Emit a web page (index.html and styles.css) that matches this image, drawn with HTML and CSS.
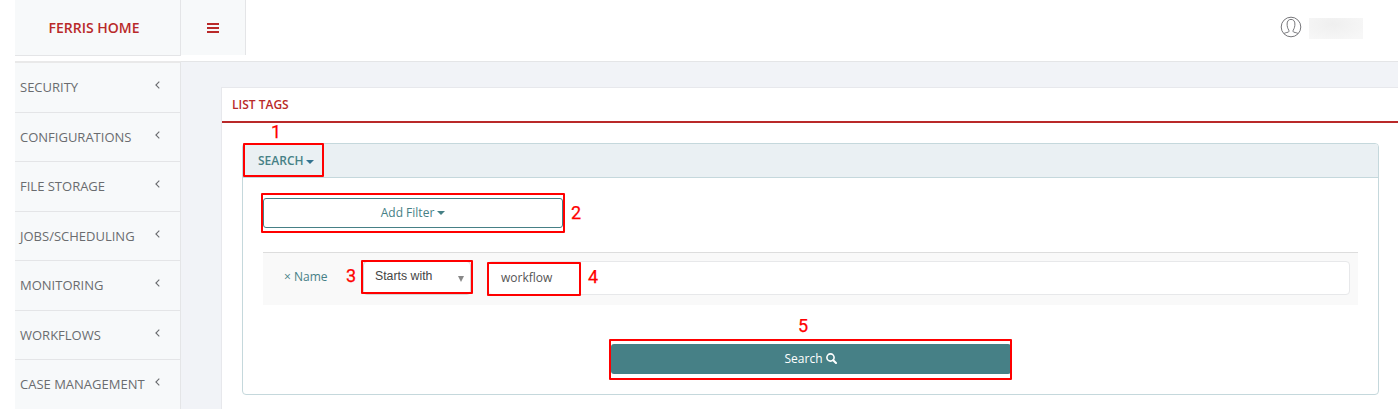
FILE: index.html
```
<!DOCTYPE html>
<html lang="en">
<head>
<meta charset="utf-8">
<title>List Tags</title>
<link rel="stylesheet" href="styles.css">
</head>
<body>
<div class="app">
  <header class="header">
    <a class="brand"><span>FERRIS HOME</span></a>
    <a class="toggle"><svg width="12" height="10" viewBox="0 0 12 10"><path d="M0 0h12v2H0zM0 4h12v2H0zM0 8h12v2H0z" fill="#b92929"/></svg></a>
    <div class="user">
      <svg width="22" height="22" viewBox="0 0 22 22" fill="none" stroke="#77777b" stroke-width="1"><circle cx="11" cy="11" r="9.800"/><path d="M4 17.600c.7-.7 2.500-1 4-1.400 1-.3 1.300-1 .7-2.200C7.600 12.300 7.100 10.300 7.100 8c0-2.800 1.300-4.600 3.900-4.600S14.900 5.200 14.900 8c0 2.300-.5 4.300-1.600 6-.6 1.200-.3 1.900.7 2.200 1.500.4 3.300.7 4 1.400"/></svg>
      <span class="user-name"></span>
    </div>
  </header>
  <div class="body">
    <nav class="sidebar">
      <a class="item"><span>SECURITY</span><svg class="chev" viewBox="0 0 5 8"><path d="M4.300.6.9 4l3.400 3.400"/></svg></a>
      <a class="item"><span>CONFIGURATIONS</span><svg class="chev" viewBox="0 0 5 8"><path d="M4.300.6.9 4l3.400 3.400"/></svg></a>
      <a class="item"><span>FILE STORAGE</span><svg class="chev" viewBox="0 0 5 8"><path d="M4.300.6.9 4l3.400 3.400"/></svg></a>
      <a class="item"><span>JOBS/SCHEDULING</span><svg class="chev" viewBox="0 0 5 8"><path d="M4.300.6.9 4l3.400 3.400"/></svg></a>
      <a class="item"><span>MONITORING</span><svg class="chev" viewBox="0 0 5 8"><path d="M4.300.6.9 4l3.400 3.400"/></svg></a>
      <a class="item"><span>WORKFLOWS</span><svg class="chev" viewBox="0 0 5 8"><path d="M4.300.6.9 4l3.400 3.400"/></svg></a>
      <a class="item"><span>CASE MANAGEMENT</span><svg class="chev" viewBox="0 0 5 8"><path d="M4.300.6.9 4l3.400 3.400"/></svg></a>
    </nav>
    <main class="main">
      <section class="card">
        <h1 class="card-title"><span>LIST TAGS</span></h1>
        <div class="panel">
          <div class="panel-head"><span>SEARCH</span><i class="caret caret-blue"></i></div>
          <div class="panel-body">
            <div class="add-filter"><span>Add Filter</span><i class="caret"></i></div>
            <div class="filter-row">
              <a class="filter-name">× Name</a>
              <div class="select"><span>Starts with</span><i class="arrow"></i></div>
              <div class="input"><span>workflow</span></div>
            </div>
            <div class="search-btn"><span>Search</span><svg width="11" height="11" viewBox="0 0 11 11" fill="none" stroke="#fff"><circle cx="4.500" cy="4.500" r="3.600" stroke-width="1.600"/><path d="M7.200 7.200l2.800 2.800" stroke-width="2" stroke-linecap="round"/></svg></div>
          </div>
        </div>
      </section>
    </main>
  </div>
  <div class="mark mark-1"><b>1</b></div>
  <div class="mark mark-2"><b>2</b></div>
  <div class="mark mark-3"><b>3</b></div>
  <div class="mark mark-4"><b>4</b></div>
  <div class="mark mark-5"><b>5</b></div>
</div>
</body>
</html>
```
FILE: styles.css
```
* { box-sizing: border-box; }
body { margin: 0; background: #fff; font-family: "Open Sans", "Noto Sans", sans-serif; font-size: 12px; color: #6a6c6f; }
.app { position: relative; height: 409px; padding-left: 15px; overflow: hidden; display: flex; flex-direction: column; }
.header { display: flex; height: 61px; flex: none; align-items: flex-start; }
.brand { width: 166px; height: 56px; display: flex; align-items: center; justify-content: center; background: #f7f9fa; border-right: 1px solid #e4e5e7; border-bottom: 1px solid #e4e5e7; color: #b92929; font-size: 14px; font-weight: 600; padding: 0 7px 1px 0; }
.toggle { width: 65px; height: 55px; display: flex; align-items: center; justify-content: center; background: #f7f9fa; border-right: 1px solid #e4e5e7; padding-top: 1px; }
.user { margin-left: auto; display: flex; gap: 7px; padding: 16px 35px 0 0; }
.user-name { width: 54px; height: 21px; margin-top: 2px; background: radial-gradient(ellipse at 45% 30%, #efefef, #f7f7f7 85%); }
.body { display: flex; flex: 1; min-height: 0; }
.sidebar { width: 166px; flex: none; background: #f7f9fa; border-right: 1px solid #e4e5e7; border-top: 2px solid #e9e9e9; }
.item { display: flex; justify-content: space-between; height: 50px; border-bottom: 1px solid #e4e5e7; padding: 0 20px 0 5px; font-size: 13px; line-height: 49px; }
.item:nth-child(even) { height: 49px; }
.item:last-child { border-bottom: 0; }
.chev { width: 5px; height: 8px; margin-top: 18px; fill: none; stroke: #6a6c6f; stroke-width: 1.1; }
.main { flex: 1; min-width: 0; background: #f1f3f7; border-top: 1px solid #e4e5e7; padding: 25px 0 0 40px; }
.card { height: 340px; background: #fff; border-top: 1px solid #e7e8ec; border-left: 1px solid #e7e8ec; }
.card-title { margin: 0; height: 35px; border-bottom: 2px solid #b92929; padding-left: 10px; font-size: 12px; line-height: 33px; font-weight: 600; color: #b92929; }
.panel { margin: 20px 19px 0 20px; height: 252px; border: 1px solid #c5d8dc; border-radius: 4px; }
.panel-head { display: flex; align-items: center; height: 34px; background: #eaf0f3; border-bottom: 1px solid #c5d8dc; border-radius: 3px 3px 0 0; padding-left: 15px; color: #468086; font-weight: 600; gap: 2px; }
.panel-body { padding: 20px 20px 0; color: #468086; }
.caret { width: 0; height: 0; border: 4px solid transparent; border-top-color: currentColor; border-bottom: 0; margin-top: 2px; }
.caret-blue { color: #337390; }
.add-filter { width: 300px; height: 30px; border: 1px solid #468086; border-radius: 3px; display: flex; align-items: center; justify-content: center; gap: 3px; padding-bottom: 2px; }
.filter-row { display: flex; margin-top: 24px; height: 53px; background: #f9f9f9; border-top: 1px solid #ddd; padding: 8px 8px 0 21px; }
.filter-name { width: 79px; line-height: 32px; }
.select { width: 108px; height: 34px; background: #fff; border: 1px solid #d5d5d5; border-radius: 4px; display: flex; justify-content: space-between; font-family: "Liberation Sans", Arial, sans-serif; font-size: 12.3px; color: #444; padding: 0 6px 0 11px; line-height: 29px; }
.arrow { width: 0; height: 0; border: 3px solid transparent; border-top: 6px solid #888; border-bottom: 0; margin-top: 14px; }
.input { flex: 1; height: 34px; margin-left: 17px; background: #fff; border: 1px solid #e7e8ea; border-radius: 4px; padding-left: 12px; line-height: 32px; color: #555; }
.search-btn { width: 400px; height: 30px; margin: 39px auto 0; background: #468086; border-radius: 3px; color: #fff; display: flex; align-items: center; justify-content: center; gap: 3px; padding-bottom: 1px; }
/* Numbered step callouts laid over the page */
.mark { position: absolute; border: 2px solid #f00; border-radius: 1px; color: #f00; }
.mark b { position: absolute; font: 400 18px/20px Roboto, sans-serif; -webkit-text-stroke: .25px #f00; }
.mark-1 { left: 243px; top: 143px; width: 81px; height: 34px; }
.mark-1 b { left: 26px; top: -23px; }
.mark-2 { left: 261px; top: 193px; width: 304px; height: 40px; }
.mark-2 b { left: 308px; top: 8px; }
.mark-3 { left: 361px; top: 260px; width: 112px; height: 34px; }
.mark-3 b { left: -17px; top: 4px; }
.mark-4 { left: 487px; top: 262px; width: 94px; height: 34px; }
.mark-4 b { left: 99px; top: 3px; }
.mark-5 { left: 609px; top: 339px; width: 403px; height: 41px; }
.mark-5 b { left: 187px; top: -25px; }
```
